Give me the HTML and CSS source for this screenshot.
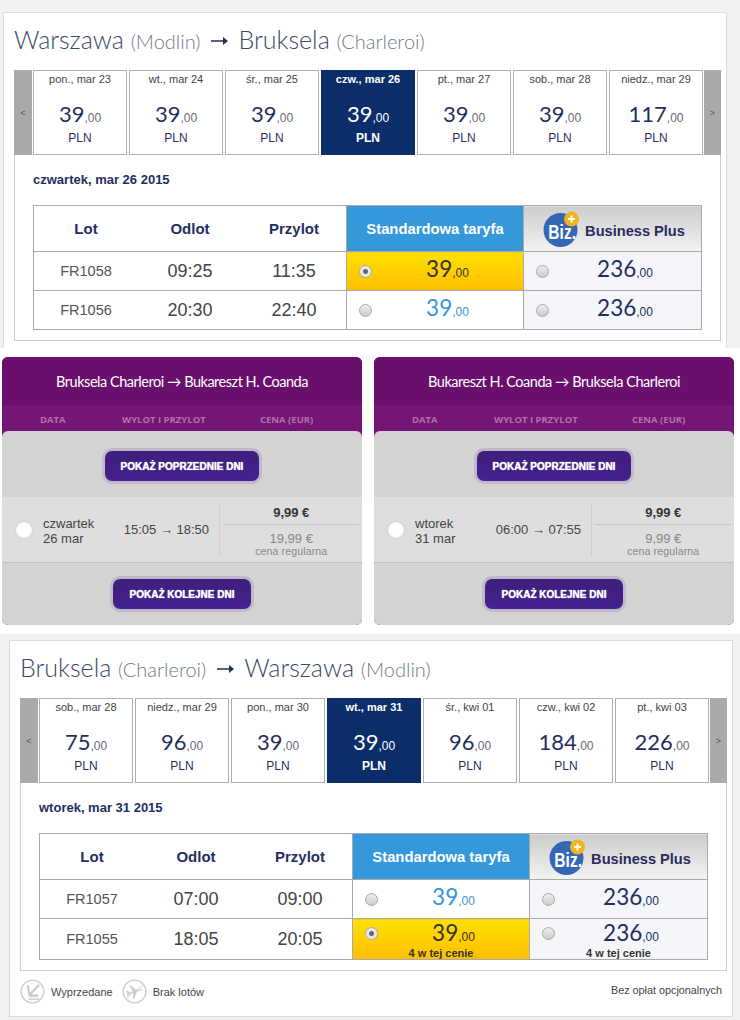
FILE: index.html
```html
<!DOCTYPE html>
<html lang="pl">
<head>
    <meta charset="UTF-8">
    <title>Loty Warszawa - Bruksela - Bukareszt</title>
    <link rel="stylesheet" href="styles.css">
</head>
<body>
    <section class="sheet sheet-top">
        <div class="card">
            <h1 class="route">Warszawa <small>(Modlin)</small><svg class="route-arrow" viewBox="0 0 17 8"><path d="M0 3.200h12V0l5 4-5 4V4.800H0z"/></svg>Bruksela <small>(Charleroi)</small></h1>
            <div class="strip">
                <div class="arrow arrow-prev">&lt;</div>
                <div class="day"><div class="day-date">pon., mar 23</div><div class="day-price">39<span>,00</span></div><div class="day-cur">PLN</div></div>
                <div class="day"><div class="day-date">wt., mar 24</div><div class="day-price">39<span>,00</span></div><div class="day-cur">PLN</div></div>
                <div class="day"><div class="day-date">śr., mar 25</div><div class="day-price">39<span>,00</span></div><div class="day-cur">PLN</div></div>
                <div class="day active"><div class="day-date">czw., mar 26</div><div class="day-price">39<span>,00</span></div><div class="day-cur">PLN</div></div>
                <div class="day"><div class="day-date">pt., mar 27</div><div class="day-price">39<span>,00</span></div><div class="day-cur">PLN</div></div>
                <div class="day"><div class="day-date">sob., mar 28</div><div class="day-price">39<span>,00</span></div><div class="day-cur">PLN</div></div>
                <div class="day"><div class="day-date">niedz., mar 29</div><div class="day-price">117<span>,00</span></div><div class="day-cur">PLN</div></div>
                <div class="arrow arrow-next">&gt;</div>
            </div>
            <div class="flights">
                <div class="flights-date">czwartek, mar 26 2015</div>
                <table class="fares">
                    <tr class="head">
                        <th class="c1">Lot</th><th class="c2">Odlot</th><th class="c3">Przylot</th>
                        <th class="std-head">Standardowa taryfa</th>
                        <th class="biz-head">
                            <div class="biz-wrap">
                                <svg class="biz-logo" viewBox="0 0 36 36">
                                    <circle cx="17.500" cy="19" r="17" fill="#3366b3"/>
                                    <text x="5" y="28" class="biz-text" transform="translate(1.400 0) scale(.78 1)">Biz.</text>
                                    <circle cx="28.500" cy="8" r="7.500" fill="#f0b41e"/>
                                    <path d="M28.500 4.500v7M25 8h7" stroke="#fff" stroke-width="2"/>
                                </svg>
                                <span class="biz-name">Business Plus</span>
                            </div>
                        </th>
                    </tr>
                    <tr>
                        <td class="no">FR1058</td><td class="time">09:25</td><td class="time">11:35</td>
                        <td class="std picked"><div class="fare"><span class="radio on"></span><div class="fare-body"><div class="price">39<span>,00</span></div></div></div></td>
                        <td class="biz"><div class="fare"><span class="radio"></span><div class="fare-body"><div class="price">236<span>,00</span></div></div></div></td>
                    </tr>
                    <tr>
                        <td class="no">FR1056</td><td class="time">20:30</td><td class="time">22:40</td>
                        <td class="std"><div class="fare"><span class="radio"></span><div class="fare-body"><div class="price">39<span>,00</span></div></div></div></td>
                        <td class="biz"><div class="fare"><span class="radio"></span><div class="fare-body"><div class="price">236<span>,00</span></div></div></div></td>
                    </tr>
                </table>
            </div>
        </div>
    </section>

    <section class="panels">
        <div class="panel">
            <div class="panel-title">Bruksela Charleroi → Bukareszt H. Coanda</div>
            <div class="panel-cols"><span class="col-a">DATA</span><span class="col-b">WYLOT I PRZYLOT</span><span class="col-c">CENA (EUR)</span></div>
            <div class="panel-body">
                <div class="more more-top"><button class="more-btn">POKAŻ POPRZEDNIE DNI</button></div>
                <div class="offer">
                    <span class="offer-radio"></span>
                    <div class="offer-date">czwartek<br>26 mar</div>
                    <div class="offer-time">15:05 → 18:50</div>
                    <div class="offer-price">
                        <div class="now">9,99 €</div>
                        <div class="regular">19,99 €</div>
                        <div class="regular-label">cena regularna</div>
                    </div>
                </div>
                <div class="more more-bottom"><button class="more-btn">POKAŻ KOLEJNE DNI</button></div>
            </div>
        </div>
        <div class="panel">
            <div class="panel-title">Bukareszt H. Coanda → Bruksela Charleroi</div>
            <div class="panel-cols"><span class="col-a">DATA</span><span class="col-b">WYLOT I PRZYLOT</span><span class="col-c">CENA (EUR)</span></div>
            <div class="panel-body">
                <div class="more more-top"><button class="more-btn">POKAŻ POPRZEDNIE DNI</button></div>
                <div class="offer">
                    <span class="offer-radio"></span>
                    <div class="offer-date">wtorek<br>31 mar</div>
                    <div class="offer-time">06:00 → 07:55</div>
                    <div class="offer-price">
                        <div class="now">9,99 €</div>
                        <div class="regular">9,99 €</div>
                        <div class="regular-label">cena regularna</div>
                    </div>
                </div>
                <div class="more more-bottom"><button class="more-btn">POKAŻ KOLEJNE DNI</button></div>
            </div>
        </div>
    </section>

    <section class="sheet sheet-bottom">
        <div class="card">
            <h1 class="route">Bruksela <small>(Charleroi)</small><svg class="route-arrow" viewBox="0 0 17 8"><path d="M0 3.200h12V0l5 4-5 4V4.800H0z"/></svg>Warszawa <small>(Modlin)</small></h1>
            <div class="strip">
                <div class="arrow arrow-prev">&lt;</div>
                <div class="day"><div class="day-date">sob., mar 28</div><div class="day-price">75<span>,00</span></div><div class="day-cur">PLN</div></div>
                <div class="day"><div class="day-date">niedz., mar 29</div><div class="day-price">96<span>,00</span></div><div class="day-cur">PLN</div></div>
                <div class="day"><div class="day-date">pon., mar 30</div><div class="day-price">39<span>,00</span></div><div class="day-cur">PLN</div></div>
                <div class="day active"><div class="day-date">wt., mar 31</div><div class="day-price">39<span>,00</span></div><div class="day-cur">PLN</div></div>
                <div class="day"><div class="day-date">śr., kwi 01</div><div class="day-price">96<span>,00</span></div><div class="day-cur">PLN</div></div>
                <div class="day"><div class="day-date">czw., kwi 02</div><div class="day-price">184<span>,00</span></div><div class="day-cur">PLN</div></div>
                <div class="day"><div class="day-date">pt., kwi 03</div><div class="day-price">226<span>,00</span></div><div class="day-cur">PLN</div></div>
                <div class="arrow arrow-next">&gt;</div>
            </div>
            <div class="flights">
                <div class="flights-date">wtorek, mar 31 2015</div>
                <table class="fares">
                    <tr class="head">
                        <th class="c1">Lot</th><th class="c2">Odlot</th><th class="c3">Przylot</th>
                        <th class="std-head">Standardowa taryfa</th>
                        <th class="biz-head">
                            <div class="biz-wrap">
                                <svg class="biz-logo" viewBox="0 0 36 36">
                                    <circle cx="17.500" cy="19" r="17" fill="#3366b3"/>
                                    <text x="5" y="28" class="biz-text" transform="translate(1.400 0) scale(.78 1)">Biz.</text>
                                    <circle cx="28.500" cy="8" r="7.500" fill="#f0b41e"/>
                                    <path d="M28.500 4.500v7M25 8h7" stroke="#fff" stroke-width="2"/>
                                </svg>
                                <span class="biz-name">Business Plus</span>
                            </div>
                        </th>
                    </tr>
                    <tr>
                        <td class="no">FR1057</td><td class="time">07:00</td><td class="time">09:00</td>
                        <td class="std"><div class="fare"><span class="radio"></span><div class="fare-body"><div class="price">39<span>,00</span></div></div></div></td>
                        <td class="biz"><div class="fare"><span class="radio"></span><div class="fare-body"><div class="price">236<span>,00</span></div></div></div></td>
                    </tr>
                    <tr class="tall">
                        <td class="no">FR1055</td><td class="time">18:05</td><td class="time">20:05</td>
                        <td class="std picked"><div class="fare"><span class="radio on"></span><div class="fare-body"><div class="price">39<span>,00</span></div><div class="note">4 w tej cenie</div></div></div></td>
                        <td class="biz"><div class="fare"><span class="radio"></span><div class="fare-body"><div class="price">236<span>,00</span></div><div class="note">4 w tej cenie</div></div></div></td>
                    </tr>
                </table>
            </div>
            <div class="legend">
                <svg class="legend-icon" viewBox="0 0 26 26">
                    <circle cx="13" cy="13" r="11.800" fill="none" stroke="#ccc" stroke-width="1.400"/>
                    <path d="M8 6.500l2 10.500M20 6L9 17.500" fill="none" stroke="#c8c8c8" stroke-width="2.200"/>
                    <path d="M10 16h9v2.500H10z" fill="#c8c8c8"/>
                    <path d="M9 20h11v2H9z" fill="#d4d4d4"/>
                </svg>
                <span class="legend-text">Wyprzedane</span>
                <svg class="legend-icon second" viewBox="0 0 26 26">
                    <circle cx="13" cy="13" r="11.800" fill="none" stroke="#ccc" stroke-width="1.400"/>
                    <path d="M5 19L21 7" stroke="#ccc" stroke-width="1"/>
                    <g transform="rotate(-14 13 13)">
                        <path d="M4.500 10.500h1.300l1.700 1.800h4L9.300 6h1.700l4.200 6.300h5c1.600 0 1.600 1.400 0 1.400h-5L11 20H9.300l2.200-6.300h-4l-1.700 1.800H4.500l1-2.500z" fill="#ccc"/>
                    </g>
                </svg>
                <span class="legend-text">Brak lotów</span>
                <span class="legend-fees">Bez opłat opcjonalnych</span>
            </div>
        </div>
    </section>
</body>
</html>
```

FILE: styles.css
```css
body {
    margin: 0;
    background: #fff;
    font-family: 'Liberation Sans', Arial, sans-serif;
    color: #444;
}
.biz-text {
    font: bold 20px 'Liberation Sans', sans-serif;
    fill: #fff;
}
.sheet {
    background: #f1f1f1;
}
.sheet-top {
    padding: 12px 13px 0 3px;
}
.sheet-bottom {
    padding: 6px 7px 4px 9px;
}
.card {
    background: #fff;
    border: 1px solid #dcdcdc;
    padding: 0 5px 0 10px;
}
.sheet-top .card {
    border-bottom: none;
    padding-bottom: 7px;
}
.route {
    margin: 0 0 1px;
    height: 56px;
    line-height: 52px;
    font-family: Lato, sans-serif;
    font-weight: 300;
    font-size: 25px;
    color: #3a4a68;
    white-space: nowrap;
}
.route small {
    font-size: 20px;
    color: #6f7a8a;
}
.route-arrow {
    width: 17px;
    height: 8px;
    margin: 0 10px 0 11px;
    vertical-align: 4px;
    fill: #1f2f5f;
}
.strip {
    display: flex;
    gap: 2px;
    height: 85px;
}
.arrow {
    background: #aaa;
    color: #555;
    font-size: 9px;
    display: flex;
    align-items: center;
    justify-content: center;
}
.arrow-prev {
    width: 18px;
    margin-right: -1px;
}
.arrow-next {
    width: 17px;
    margin-left: -1px;
}
.day {
    width: 94px;
    box-sizing: border-box;
    border: 1px solid #b0b0b0;
    text-align: center;
    color: #1f2f5f;
}
.day-date {
    margin-top: 1px;
    font-size: 11px;
    line-height: 14px;
    color: #444;
    white-space: nowrap;
}
.day-price {
    margin-top: 13px;
    height: 30px;
    line-height: 30px;
    font-family: Lato, sans-serif;
    font-size: 22px;
    color: #1f2f5f;
}
.day-price span {
    font-family: 'Liberation Sans', sans-serif;
    font-size: 12px;
    color: #5f6b7c;
}
.day-cur {
    margin-top: 2px;
    font-size: 12px;
    line-height: 14px;
}
.day.active {
    background: #0b2e6b;
    border-color: #0b2e6b;
    color: #fff;
}
.day.active .day-date,
.day.active .day-price,
.day.active .day-price span {
    color: #fff;
}
.day.active .day-date,
.day.active .day-cur {
    font-weight: bold;
}
.flights {
    border: 1px solid #ccc;
    border-top: none;
    padding: 0 0 10px 18px;
}
.flights-date {
    height: 50px;
    line-height: 50px;
    font-size: 13px;
    font-weight: bold;
    color: #1f2f5f;
}
.fares {
    border-collapse: collapse;
    table-layout: fixed;
    width: 669px;
}
.fares th,
.fares td {
    border: 1px solid #aaa;
    padding: 0;
    text-align: center;
}
.fares th.c1, .fares td.no {
    border-right: none;
}
.fares th.c2, .fares td:nth-child(2) {
    border-left: none;
    border-right: none;
}
.fares th.c3, .fares td:nth-child(3) {
    border-left: none;
}
.c1, .c2, .c3 {
    width: 104px;
}
.head th {
    font-size: 15px;
    color: #1f2f5f;
}
.fares tr {
    height: 39px;
}
.fares tr.head {
    height: 46px;
}
.fares tr.tall {
    height: 41px;
}
.fares th.std-head {
    width: 176px;
    background: #3498db;
    color: #fff;
    font-size: 14.8px;
}
.fares th.biz-head {
    background: linear-gradient(#ccc, #f3f3f3);
    color: #2b2b5e;
}
.biz-wrap {
    display: flex;
    align-items: center;
    justify-content: center;
    gap: 6px;
    padding-left: 3px;
}
.biz-logo {
    width: 36px;
    height: 36px;
}
.biz-name {
    margin-top: 5px;
    font-size: 14.6px;
}
.no {
    font-size: 14.5px;
    color: #555;
}
.time {
    font-size: 18px;
    color: #444;
}
.std {
    color: #3498db;
}
.std.picked {
    background: linear-gradient(#ffe000, #ffbe00);
    color: #333;
}
.biz {
    background: #f4f6f9;
    color: #232f5f;
}
.fare {
    display: flex;
    align-items: center;
    padding-left: 12px;
}
.tall .fare {
    align-items: flex-start;
}
.radio {
    flex: none;
    width: 13px;
    height: 13px;
    box-sizing: border-box;
    border: 1px solid #aaa;
    border-radius: 50%;
    background: linear-gradient(#eee, #ccc);
}
.tall .radio {
    margin-top: 7px;
}
.radio.on {
    background: radial-gradient(circle, #666 0 2px, #e8e8e8 3px);
}
.fare-body {
    flex: 1;
}
.price {
    font-family: Lato, sans-serif;
    font-size: 22.5px;
    line-height: 26px;
}
.price span {
    font-family: 'Liberation Sans', sans-serif;
    font-size: 12px;
}
.note {
    margin: -3px 25px 0 0;
    font-size: 11px;
    line-height: 12px;
    font-weight: bold;
    color: #333;
}
.panels {
    display: flex;
    gap: 12px;
    padding: 9px 2px;
    height: 268px;
}
.panel {
    width: 360px;
    border-radius: 6px;
    overflow: hidden;
    background: #751575;
}
.panel-title {
    height: 48px;
    line-height: 50px;
    background: #6a0f6d;
    color: #fff;
    font-family: Lato, sans-serif;
    font-size: 14.5px;
    letter-spacing: -0.48px;
    text-align: center;
    white-space: nowrap;
}
.panel-cols {
    height: 26px;
    padding-top: 3px;
    box-sizing: border-box;
    display: flex;
    align-items: center;
    font-family: 'Open Sans', sans-serif;
    font-size: 9.5px;
    font-weight: bold;
    color: #b070ad;
    white-space: nowrap;
}
.col-a {
    margin-left: 38px;
    width: 82px;
}
.col-b {
    width: 138px;
}
.panel-body {
    background: #d3d3d3;
    border-radius: 6px 6px 0 0;
    height: 194px;
}
.more {
    display: flex;
    justify-content: center;
}
.more-top {
    height: 46px;
    padding-top: 20px;
}
.more-bottom {
    padding-top: 16px;
}
.more-btn {
    height: 30px;
    padding: 0 16px;
    border: none;
    border-radius: 7px;
    background: linear-gradient(#3f1f7d, #43218f);
    box-shadow: 0 0 0 3px #bdb9c9;
    color: #fff;
    font-family: 'Liberation Sans', sans-serif;
    font-size: 10px;
    font-weight: bold;
    text-shadow: 0 0 1px #fff;
}
.offer {
    display: flex;
    align-items: center;
    height: 65px;
    background: #dedede;
    border-bottom: 1px solid #c4c4c4;
}
.offer-radio {
    flex: none;
    width: 16px;
    height: 16px;
    margin: 0 11px 0 14px;
    border-radius: 50%;
    background: radial-gradient(circle, #fff 50%, #e8e8e8);
    box-shadow: 0 0 2px #bbb;
}
.offer-date {
    width: 81px;
    margin-top: 2px;
    font-size: 13px;
    line-height: 15px;
}
.offer-time {
    width: 96px;
    font-size: 13px;
    margin-top: -1px;
    white-space: nowrap;
}
.offer-price {
    width: 142px;
    height: 54px;
    border-left: 1px solid #cfcfcf;
    text-align: center;
}
.now {
    height: 21px;
    margin: 0 3px;
    line-height: 19px;
    font-size: 13px;
    font-weight: bold;
    color: #333;
    border-bottom: 1px solid #c4c4c4;
}
.regular {
    margin-top: 6px;
    font-size: 13px;
    line-height: 15px;
    color: #888;
}
.regular-label {
    margin-top: -1px;
    font-size: 10.5px;
    line-height: 12px;
    color: #888;
    letter-spacing: 0.15px;
}
.legend {
    display: flex;
    align-items: center;
    height: 41px;
    padding: 0 5px 4px 0;
}
.legend-icon {
    width: 25px;
    height: 25px;
    flex: none;
}
.legend-icon.second {
    margin-left: 9px;
}
.legend-text {
    margin-left: 6px;
    font-size: 11px;
    color: #444;
}
.legend-fees {
    margin-left: auto;
    margin-top: -4px;
    font-size: 10.8px;
    color: #444;
}
```
